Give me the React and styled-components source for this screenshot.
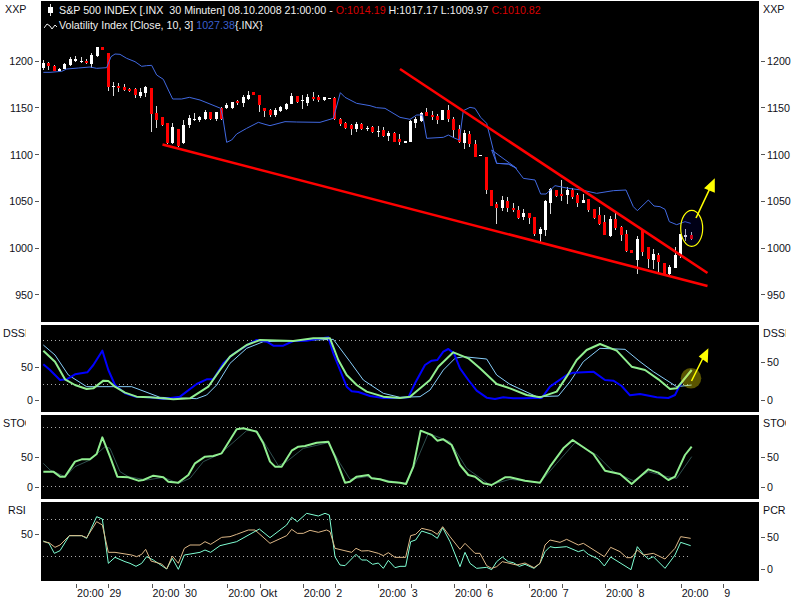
import React from 'react'
import styled, { createGlobalStyle } from 'styled-components'

const GlobalStyle = createGlobalStyle`
  html, body { margin: 0; padding: 0; background: #fff; }
  body { width: 800px; height: 600px; overflow: hidden; font-family: "Liberation Sans", Arial, sans-serif; font-size: 10.7px; color: #101018; }
`

const Page = styled.div`
  width: 800px;
  height: 600px;
  overflow: hidden;
  padding-top: 1px;
  box-sizing: border-box;
  display: flex;
  flex-direction: column;
  gap: 3px;
`
const PaneRow = styled.div`
  display: grid;
  grid-template-columns: 41px 718px 41px;
  height: ${p => p.$h}px;
`
const Plot = styled.div`
  position: relative;
  background: #000;
  overflow: hidden;
`
const PlotSvg = styled.svg`
  display: block;
`
const Axis = styled.div`
  display: flex;
  flex-direction: column;
  align-items: ${p => (p.$side === 'left' ? 'flex-end' : 'flex-start')};
`
const AxisName = styled.div`
  align-self: flex-start;
  height: 16px;
  line-height: 16px;
  width: 23px;
  margin-left: ${p => p.$indent}px;
  overflow: hidden;
  white-space: nowrap;
`
const TickRow = styled.div`
  height: 14px;
  line-height: 14px;
  margin-top: ${p => p.$gap}px;
  display: flex;
  align-items: center;
  gap: 2px;
  flex-direction: ${p => (p.$side === 'left' ? 'row' : 'row-reverse')};
  padding: ${p => (p.$side === 'left' ? '0 2px 0 0' : '0 0 0 2px')};
`
const TickDash = styled.span`
  width: 4px;
  height: 1px;
  background: #555;
`
const Legend = styled.div`
  position: absolute;
  left: 3px;
  top: 2px;
  color: #f0f0f0;
  white-space: pre;
`
const LegendLine = styled.div`
  display: flex;
  align-items: center;
  height: 15px;
  line-height: 15px;
`
const LegendIcon = styled.svg`
  flex: none;
  margin-right: 1px;
`
const Val = styled.span`
  color: ${p => p.$c};
`
const TimeAxis = styled.div`
  display: flex;
  padding-left: 76px;
  height: 19px;
  margin-top: -3px;
`
const TimeCell = styled.div`
  flex: none;
  width: ${p => p.$w}px;
  display: flex;
  flex-direction: column;
  padding-top: 3px;
`
const TimeTick = styled.span`
  width: 1px;
  height: 4px;
  background: #555;
`
const TimeLabel = styled.span`
  margin: -2px 0 0 1px;
  line-height: 14px;
  white-space: nowrap;
`
const Trace = styled.polyline`
  fill: none;
  stroke: ${p => p.$c};
  stroke-width: ${p => p.$w};
  stroke-linejoin: round;
`
const Dotted = styled.line`
  stroke: #aaa;
  stroke-width: 1;
  stroke-dasharray: 1 3;
  shape-rendering: crispEdges;
`
const Wick = styled.rect`
  fill: #d8d8d8;
  shape-rendering: crispEdges;
`
const Body = styled.rect`
  fill: ${p => (p.$up ? '#fff' : '#f00')};
  shape-rendering: crispEdges;
`
const TrendLine = styled.line`
  stroke: #f00;
  stroke-width: 2.6;
`
const Mark = styled.path`
  fill: #ff0;
  stroke: #ff0;
  stroke-width: 1.6;
`

// coordinates below are read off 3x crops, so convert back to page pixels
const pts = (flat, ox, oy) => {
  const out = []
  for (let i = 0; i < flat.length; i += 2) out.push(`${ox + flat[i] / 3},${oy + flat[i + 1] / 3}`)
  return out.join(' ')
}

const upper = [
  ['w',180,188,205,210],['r',185,190,197,210],['r',195,198,213,214],['w',203,207,213,213],['w',190,192,207,208],
  ['w',172,178,196,197],['w',168,178,182,186],['w',172,182,184,188],['r',178,184,190,192],['w',160,165,192,203],
  ['w',140,141,168,170],['r',141,142,149,149],['r',158,158,260,272],['w',247,257,259,288],['r',248,258,263,275],
  ['r',252,261,270,273],['r',265,267,273,277],['r',265,268,285,293],['w',265,276,288,295],['w',258,261,280,292],
  ['r',264,264,342,395],['r',318,340,360,385],['r',350,350,376,378],['r',368,368,430,432],['w',370,380,428,432],
  ['r',387,387,438,440],['w',360,375,430,432],['w',345,353,376,385],['w',338,357,360,364],['w',348,352,360,365],
  ['w',330,335,358,360],['r',335,335,358,360],['w',335,337,358,362],['r',322,325,358,360],['w',310,316,325,328],
  ['w',305,307,325,327],['r',300,303,310,315],['w',285,292,308,320],['w',273,285,298,300],['r',276,276,285,285],
  ['r',285,285,315,335],['r',323,323,332,350],['r',328,330,345,352],['w',325,330,345,352],['w',318,322,332,335],
  ['w',308,312,328,330],['w',280,288,312,313],['r',287,288,307,310],['w',285,300,303,327],['w',282,290,308,318],
  ['r',276,292,298,302],['r',284,292,301,306],['w',290,290,300,304],['w',293,295,297,297],['r',292,293,358,360],
  ['r',355,358,373,377],['r',365,368,383,387],['r',372,376,388,405],['w',365,372,388,395],['r',368,371,388,391],
  ['w',378,384,386,392],['r',378,381,396,400],['w',378,392,394,410],['r',382,390,408,410],['w',392,398,408,422],
  ['r',395,398,425,426],['r',402,417,425,434],['w',423,424,428,428],['w',360,362,426,426],['w',350,356,368,385],
  ['w',335,338,362,365],['r',324,335,348,349],['r',332,345,352,360],['r',342,347,360,372],['w',330,331,360,361],
  ['r',316,330,358,365],['r',350,358,390,415],['r',376,388,425,428],['w',390,400,428,446],['r',393,402,431,440],
  ['r',420,432,471,472],['w',465,465,467,467],
]
// second half was read from a crop starting at y=150
const lower = [
  ['r',22,22,120,132],['r',120,120,167,167],['r',155,162,174,222],['w',138,150,175,182],['r',142,153,173,186],
  ['r',158,174,179,187],['r',168,180,204,206],['w',178,189,200,211],['r',188,190,204,222],['r',201,201,252,258],
  ['w',232,236,252,277],['w',150,152,240,258],['w',115,118,158,192],['r',120,120,138,140],['r',90,132,137,153],
  ['w',110,120,135,162],['r',115,120,142,148],['r',128,135,158,172],['w',132,150,158,160],['r',147,147,180,186],
  ['r',176,177,205,208],['r',170,195,222,225],['r',195,216,254,256],['w',198,208,258,262],['r',190,208,234,240],
  ['r',228,231,255,272],['r',240,252,303,306],['r',300,300,309,309],['w',258,268,330,372],['r',240,240,305,318],
  ['r',290,292,327,355],['w',297,312,330,358],['r',310,315,336,370],['r',340,340,376,378],['w',345,351,372,374],
  ['w',290,315,353,354],['w',252,252,315,325],['w',237,255,260,273],['r',245,255,268,270],
].map(([c, ...v]) => [c, ...v.map(n => n + 450)])

const candles = [...upper, ...lower]

const volatility = [
  pts([130,217,150,217,185,214,200,207,235,204,270,201,290,205,320,203,333,170,345,162,360,163,380,175,405,185,425,199,440,197,455,196,470,225,490,238,505,270,518,297,545,297,568,292,600,300,630,312,662,325,668,350,680,427,695,420,710,402,740,385,775,367,795,373,810,377], 0, 0),
  pts([45,365,80,366,150,367,190,355,211,278,225,292,260,310,300,317,320,323,345,325,390,352,420,358,440,345,458,345,470,415,520,412,535,405,555,415,568,420,580,332,600,322,615,325,632,352,650,370,680,490,715,492,740,505], 270, 0),
  pts([275,0,290,40,325,42,345,52,370,85,405,90,422,132,438,132,465,107,505,115,545,120,590,130,640,122,678,120,700,170,712,182,745,150,762,168,780,170,795,178,808,215,830,224,855,215,872,220], 400, 150),
].join(' ')

const dssBlue = [
  pts([130,133,150,150,180,180,200,178,225,163,262,157,280,135,307,92,325,150,345,195,375,220,405,230,450,232,490,237,540,230,590,192,620,178,640,178,670,130,700,102,750,70,770,60,800,65,820,77,850,77,880,63,920,62,985,52,1000,100,1020,150,1040,200,1055,214,1075,216,1110,228,1150,234,1200,234], 0, 320),
  pts([25,232,45,190,75,135,95,122,112,120,130,95,145,87,162,100,180,145,205,180,230,212,260,233,285,237,310,232,340,235,370,235,400,234,425,234,450,200,500,165,520,158,580,155,615,180,640,182,665,198,690,226,720,222,770,232,805,234,825,225,835,205,850,180,875,150], 400, 320),
].join(' ')
const dssGreen = [
  pts([130,92,165,125,195,178,225,195,260,207,280,205,310,182,325,183,345,200,375,218,410,230,450,232,520,238,570,235,625,200,660,150,690,110,740,75,780,60,880,63,940,55,990,55,1015,120,1040,165,1070,195,1100,215,1150,230,1200,234], 0, 320),
  pts([30,230,90,180,115,140,160,97,205,115,240,145,290,192,330,205,380,225,420,232,470,215,500,170,530,120,560,90,600,72,650,92,695,140,735,150,775,178,810,207,830,205,875,150], 400, 320),
].join(' ')
const dssThin = [
  pts([130,75,165,105,205,165,260,200,300,200,395,200,435,215,480,232,590,236,620,225,650,195,690,130,740,85,790,65,880,62,1000,58,1050,125,1090,180,1150,220,1200,232], 0, 320),
  pts([60,230,90,210,130,150,165,115,190,110,260,117,290,165,330,193,410,230,475,228,510,185,550,125,600,85,675,88,720,125,760,155,830,200,875,195], 400, 320),
].join(' ')

const stoGreen = [
  pts([130,455,160,455,180,470,195,470,225,425,245,418,270,418,290,402,307,352,330,410,352,470,385,472,415,482,430,480,460,467,490,472,505,485,535,488,565,465,585,430,615,410,640,408,665,400,710,328,730,325,770,335,790,370,810,425,825,440,845,440,875,392,895,380,915,378,950,368,985,365,1005,410,1035,488,1050,485,1070,470,1105,465,1115,475,1140,478,1165,485,1200,488], 0, 320),
  pts([18,492,40,440,62,332,95,345,112,362,130,358,155,375,180,435,205,465,225,470,250,490,275,495,315,472,330,472,375,482,420,488,450,440,490,385,518,360,580,402,615,452,660,462,695,492,745,448,775,458,805,480,825,470,855,405,875,380], 400, 320),
].join(' ')
const stoThin = [
  pts([130,430,150,450,195,470,225,440,270,420,315,380,330,385,360,455,385,470,440,480,490,472,535,490,570,475,610,425,660,402,740,332,770,332,800,380,835,437,860,425,910,385,985,368,1020,430,1050,478,1100,470,1200,488], 0, 320),
  pts([20,490,55,410,85,340,150,365,200,445,270,495,330,478,420,488,470,430,525,368,590,405,640,455,700,482,745,455,800,470,830,475,875,410], 400, 320),
].join(' ')

const rsiCyan = [
  pts([130,138,147,145,163,175,180,167,208,122,245,122,260,130,290,65,307,72,325,205,345,187,375,200,390,205,408,214,425,205,440,185,460,195,500,222,517,190,535,223,553,180,600,172,615,165,632,172,660,152,710,140,778,102,810,128,860,90,875,67,892,80,920,55,955,63,975,55,988,60,1005,185,1020,210,1035,212,1068,178,1085,195,1100,195,1118,208,1135,204,1150,220,1165,196,1185,218,1200,214], 0, 495),
  pts([17,214,32,140,47,135,65,108,95,118,112,130,128,98,150,140,180,215,195,172,210,205,230,220,260,217,275,224,290,200,307,186,325,200,340,203,358,214,375,208,402,220,420,205,435,170,450,155,465,158,500,155,535,170,550,165,565,178,595,192,613,213,632,186,693,224,712,155,730,178,745,192,760,185,795,220,825,180,842,142,872,152], 400, 495),
].join(' ')
const rsiTan = [
  pts([130,140,147,143,165,157,180,150,208,122,245,122,260,128,290,80,307,90,325,172,345,172,395,180,410,185,425,178,437,163,453,198,485,207,500,222,517,183,535,205,553,160,570,150,600,150,615,140,632,148,665,127,690,125,710,118,745,105,765,105,810,145,860,122,875,103,892,115,910,115,930,106,955,112,980,105,990,110,1005,160,1055,172,1068,160,1085,168,1105,167,1135,175,1150,182,1165,173,1185,187,1200,187], 0, 495),
  pts([17,187,32,122,47,118,65,100,95,107,112,118,128,95,150,125,180,163,195,145,225,175,240,175,260,212,275,220,290,215,307,200,350,210,375,204,402,218,420,205,435,150,450,135,480,142,500,133,535,150,550,145,613,185,632,157,660,170,680,188,695,188,712,165,730,180,760,175,795,192,825,160,842,125,872,130], 400, 495),
].join(' ')

const times = [
  ['20:00', 32.4], ['29', 43.2], ['20:00', 32.4], ['30', 43.2], ['20:00', 32.4], ['Okt', 43.2],
  ['20:00', 32.4], ['2', 43.2], ['20:00', 32.4], ['3', 43.2], ['20:00', 32.4], ['6', 43.2],
  ['20:00', 32.4], ['7', 43.2], ['20:00', 32.4], ['8', 43.2], ['20:00', 42.6], ['9', 30],
]

const AxisColumn = ({ side, name, indent, ticks }) => (
  <Axis $side={side}>
    <AxisName $indent={indent}>{name}</AxisName>
    {ticks.map(([label, gap]) => (
      <TickRow key={label} $side={side} $gap={gap}>
        {label}
        <TickDash />
      </TickRow>
    ))}
  </Axis>
)

const Pane = ({ h, top, left, right, children, overlay }) => (
  <PaneRow $h={h}>
    <AxisColumn side="left" {...left} />
    <Plot>
      <PlotSvg width="718" height={h} viewBox={`41 ${top} 718 ${h}`}>
        {children}
      </PlotSvg>
      {overlay}
    </Plot>
    <AxisColumn side="right" {...right} />
  </PaneRow>
)

const Guide = ({ y }) => <Dotted x1="43" x2="688" y1={y} y2={y} />

const priceTicks = [['1200', 37], ['1150', 32.8], ['1100', 32.8], ['1050', 32.8], ['1000', 32.8], ['950', 32.8]]

const App = () => (
  <>
    <GlobalStyle />
    <Page>
      <Pane
        h={321}
        top={1}
        left={{ name: 'XXP', indent: 5, ticks: priceTicks }}
        right={{ name: 'XXP', indent: 4, ticks: priceTicks }}
        overlay={
          <Legend>
            <LegendLine>
              <LegendIcon width="14" height="15" viewBox="0 0 14 15">
                <rect x="6" y="1" width="1" height="12" fill="#ddd" />
                <rect x="4" y="4" width="5" height="6" fill="#fff" />
              </LegendIcon>
              S&amp;P 500 INDEX [.INX  30 Minuten] 08.10.2008 21:00:00 - <Val $c="#d80000">O:1014.19</Val> H:1017.17 L:1009.97 <Val $c="#d80000">C:1010.82</Val>
            </LegendLine>
            <LegendLine>
              <LegendIcon width="14" height="15" viewBox="0 0 14 15">
                <path d="M0 10 L3 6 L6 8 L8 11 L11 7 L13 9" fill="none" stroke="#eee" strokeWidth="1" />
              </LegendIcon>
              Volatility Index [Close, 10, 3] <Val $c="#3a5fcd">1027.38</Val> {'{.INX}'}
            </LegendLine>
          </Legend>
        }
      >
        {candles.map(([c, wt, bt, bb, wb], i) => {
          const px = Math.floor(43.3 + 5.4 * i)
          return (
            <g key={i}>
              <Wick x={px} y={wt / 3} width="1" height={(wb - wt) / 3} />
              <Body $up={c === 'w'} x={px - 1} y={bt / 3} width="3" height={Math.max((bb - bt) / 3, 1)} />
            </g>
          )
        })}
        <Trace $c="#4169e1" $w={1} points={volatility} />
        <TrendLine x1="400" y1="69" x2="707.5" y2="273" />
        <TrendLine x1="162.5" y1="144.5" x2="707.5" y2="286" />
        <ellipse cx="691.7" cy="228.3" rx="11" ry="18" fill="rgba(0,0,110,0.2)" stroke="#ff0" strokeWidth="1.2" />
        <Mark d="M696 218 L712 184" />
        <Mark d="M714 180 L705.5 188 L714 191.5 Z" />
      </Pane>

      <Pane
        h={87}
        top={325}
        left={{ name: 'DSSK', indent: 3, ticks: [['50', 19], ['0', 19]] }}
        right={{ name: 'DSSK', indent: 4, ticks: [['50', 14], ['0', 24]] }}
      >
        <Guide y={340.5} />
        <Guide y={384.5} />
        <Trace $c="#87cefa" $w={1} points={dssThin} />
        <Trace $c="#0000ff" $w={2} points={dssBlue} />
        <Trace $c="#90ee90" $w={2} points={dssGreen} />
        <circle cx="691" cy="378.3" r="10.3" fill="rgba(255,240,0,0.35)" />
        <Mark d="M691.5 381 L705 354" />
        <Mark d="M707.5 350 L700 356.5 L707 361.5 Z" />
      </Pane>

      <Pane
        h={84}
        top={415}
        left={{ name: 'STOCH', indent: 3, ticks: [['50', 19], ['0', 16]] }}
        right={{ name: 'STOCH', indent: 4, ticks: [['50', 19], ['0', 16]] }}
      >
        <Guide y={427.5} />
        <Guide y={486.5} />
        <Trace $c="#2f4f4f" $w={1} points={stoThin} />
        <Trace $c="#90ee90" $w={2} points={stoGreen} />
      </Pane>

      <Pane
        h={79}
        top={502}
        left={{ name: 'RSI', indent: 8, ticks: [['50', 9]] }}
        right={{ name: 'PCR', indent: 4, ticks: [['50', 12], ['0', 18]] }}
      >
        <Guide y={519.5} />
        <Guide y={556.5} />
        <Trace $c="#7fffd4" $w={1} points={rsiCyan} />
        <Trace $c="#deb887" $w={1} points={rsiTan} />
      </Pane>

      <TimeAxis>
        {times.map(([label, w], i) => (
          <TimeCell key={i} $w={w}>
            <TimeTick />
            <TimeLabel>{label}</TimeLabel>
          </TimeCell>
        ))}
      </TimeAxis>
    </Page>
  </>
)

export default App
